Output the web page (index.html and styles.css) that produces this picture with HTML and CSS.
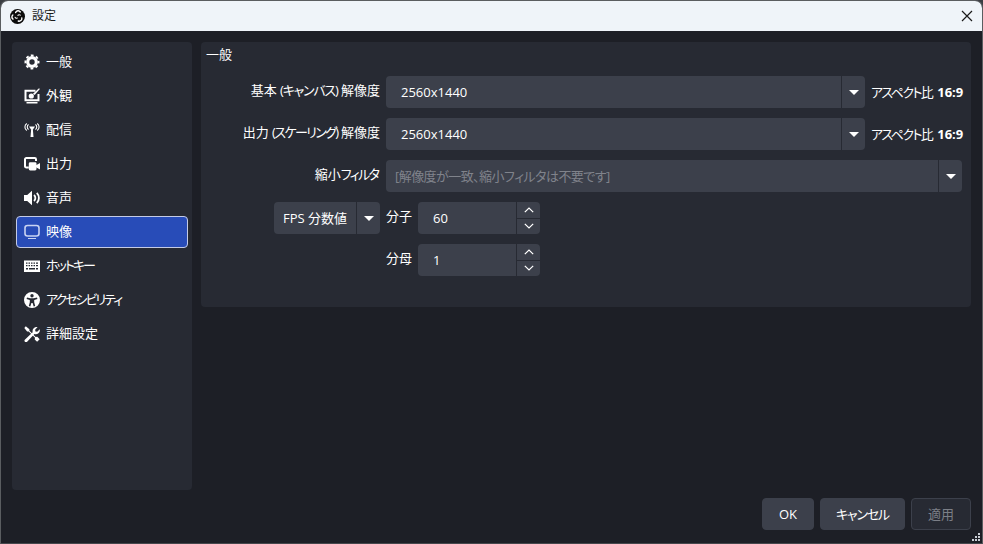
FILE: index.html
```html
<!DOCTYPE html>
<html lang="ja">
<head>
<meta charset="utf-8">
<title>設定</title>
<link rel="stylesheet" href="styles.css">
</head>
<body>
<div class="window">
  <header class="titlebar">
    <svg class="logo" viewBox="0 0 16 16"><circle cx="8" cy="8" r="8" fill="#0c0c0c"/><path fill="none" stroke="#fff" stroke-width="1.500" stroke-linecap="round" d="M6 3.800a2.800 2.800 0 0 1 5-.6M12.600 9.600a2.800 2.800 0 0 1-3.800 3.200M3.200 10.800a2.800 2.800 0 0 1-.2-4.400"/><path fill="none" stroke="#fff" stroke-width="1.100" stroke-linecap="round" d="M8.400 6.800a1.800 1.800 0 0 1 2.600-.2M5.400 8.800a1.800 1.800 0 0 0 2.400.8"/></svg>
    <span class="title">設定</span>
    <svg class="close" viewBox="0 0 12 12"><path d="M1 1l10 10M11 1L1 11" stroke="#1a1a1a" stroke-width="1.200" fill="none"/></svg>
  </header>
  <div class="content">
    <div class="main">
      <nav class="sidebar">
        <div class="item">
          <svg class="ico" viewBox="0 0 16 16"><circle cx="8" cy="8" r="4.300" fill="none" stroke="#fff" stroke-width="3.200"/><circle cx="8" cy="8" r="6.600" fill="none" stroke="#fff" stroke-width="1.800" stroke-dasharray="2.800 2.384" stroke-dashoffset="1.400"/></svg>
          <span>一般</span>
        </div>
        <div class="item">
          <svg class="ico" viewBox="0 0 16 16"><path fill="none" stroke="#fff" stroke-width="2" d="M11.500 2.800H1.500v9.400h13V6"/><path fill="#fff" d="M2.500 14h11v1.500h-11z"/><path fill="#fff" d="M15 .2l.9.9-5.300 6-1.600-1.400z"/><circle cx="7.300" cy="8" r="2.600" fill="#fff"/></svg>
          <span>外観</span>
        </div>
        <div class="item">
          <svg class="ico" viewBox="0 0 16 16"><path fill="#fff" d="M7.200 6.500h1.600l.7 8.500h-3z"/><path fill="#fff" d="M5 4.500h6L9 7.500H7z"/><path fill="none" stroke="#fff" stroke-width="1.100" d="M4.600 2.500a3 3 0 0 0 0 5M11.400 2.500a3 3 0 0 1 0 5M2.800 1.500a4.200 4.200 0 0 0 0 7M13.200 1.500a4.200 4.200 0 0 1 0 7"/></svg>
          <span>配信</span>
        </div>
        <div class="item">
          <svg class="ico" viewBox="0 0 16 16"><path fill="none" stroke="#fff" stroke-width="2" d="M4.800 11.500H2.300A1.300 1.300 0 0 1 1 10.200V3.300A1.300 1.300 0 0 1 2.300 2h8.400A1.300 1.300 0 0 1 12 3.300V5"/><rect x="4.800" y="6.300" width="7.700" height="8.200" rx="1.400" fill="#fff"/><path fill="#fff" d="M12 9.200l4-2.200v6.500l-4-2.200z"/></svg>
          <span>出力</span>
        </div>
        <div class="item">
          <svg class="ico" viewBox="0 0 16 16"><path fill="#fff" d="M0 5h3.200L8 .8v14.400L3.200 11H0z"/><path fill="none" stroke="#fff" stroke-width="1.800" d="M10 5a4 4 0 0 1 0 6M12.800 2.800a7.500 7.500 0 0 1 0 10.400"/></svg>
          <span>音声</span>
        </div>
        <div class="item selected">
          <svg class="ico" viewBox="0 0 16 16"><rect x="1" y="1.500" width="14" height="10.500" rx="2.500" fill="none" stroke="#c9d3f2" stroke-width="1.600"/><path fill="#c9d3f2" d="M4 14h8v1H4z"/></svg>
          <span>映像</span>
        </div>
        <div class="item">
          <svg class="ico" viewBox="0 0 16 16"><path fill="#fff" fill-rule="evenodd" d="M0 2.500h16v11.500H0zM2 4.500v1.200h1.500V4.500zm2.500 0v1.200H6V4.500zM7 4.500v1.200h1.500V4.500zm2.500 0v1.200H11V4.500zM12 4.500v1.200h2V4.500zM2 7v1.200h1.500V7zm2.500 0v1.200H6V7zM7 7v1.200h1.500V7zm2.500 0v1.200H11V7zM12 7v1.200h2V7zM2 10v1.500h2V10zm3 0v1.500h6V10zm7 0v1.500h2V10z"/></svg>
          <span class="kana-xl">ホットキー</span>
        </div>
        <div class="item">
          <svg class="ico" viewBox="0 0 16 16"><path fill="#fff" fill-rule="evenodd" d="M8 0a8 8 0 1 0 0 16A8 8 0 0 0 8 0zm0 2a1.700 1.700 0 1 1 0 3.400A1.700 1.700 0 0 1 8 2zM3 5.500l3.200.8h3.600l3.200-.8.400 1.400-3.200 1v2.300l1 3.800-1.500.4L8.600 11h-1.200l-1.100 3.400-1.500-.4 1-3.800V7.900l-3.200-1z"/></svg>
          <span class="kana-xl">アクセシビリティ</span>
        </div>
        <div class="item">
          <svg class="ico" viewBox="0 0 16 16"><path fill="#fff" d="M1.800.3l3.600 2.900v1.600l6.300 6.300 1.600-.3 2.400 2.400-2.600 2.600-2.400-2.400.3-1.600L4.700 5.500H3.100L.3 1.900z"/><path fill="#fff" d="M15.800 3.300l-2.600 2.500-1.700-.4-.4-1.700L13.600 1a4.200 4.200 0 0 0-4.900 5.200L.8 13.800a1.500 1.500 0 0 0 2.100 2.100l7.500-7.800a4.200 4.200 0 0 0 5.400-4.800z"/></svg>
          <span>詳細設定</span>
        </div>
      </nav>
      <section class="panel">
        <h2 class="group-title">一般</h2>
        <div class="form">
          <label class="lbl">基本 <span class="kana-m">(キャンバス)</span> 解像度</label>
          <div class="field">
            <div class="combo grow"><span class="val">2560x1440</span><span class="arrow"><i class="tri"></i></span></div>
            <span class="aspect"><span class="kana-l">アスペクト</span>比 <b>16:9</b></span>
          </div>
          <label class="lbl">出力 <span class="kana-l">(スケーリング)</span> 解像度</label>
          <div class="field">
            <div class="combo grow"><span class="val">2560x1440</span><span class="arrow"><i class="tri"></i></span></div>
            <span class="aspect"><span class="kana-l">アスペクト</span>比 <b>16:9</b></span>
          </div>
          <label class="lbl">縮小<span class="kana-l end">フィルタ</span></label>
          <div class="field">
            <div class="combo grow"><span class="val muted">[解像度が一致、縮小フィルタは不要です]</span><span class="arrow"><i class="tri"></i></span></div>
          </div>
          <div class="lbl-cell"><div class="combo fps"><span class="fps-val">FPS 分数値</span><span class="arrow"><i class="tri"></i></span></div></div>
          <div class="field">
            <label class="lbl short">分子</label>
            <div class="spin"><span class="spin-val">60</span><span class="spin-btns"><span class="sb up"><svg viewBox="0 0 10 6"><path d="M.8 5.200L5 1l4.200 4.200" fill="none" stroke="#fff" stroke-width="1.200"/></svg></span><span class="sb"><svg viewBox="0 0 10 6"><path d="M.8.800L5 5l4.200-4.200" fill="none" stroke="#fff" stroke-width="1.200"/></svg></span></span></div>
          </div>
          <div></div>
          <div class="field">
            <label class="lbl short">分母</label>
            <div class="spin"><span class="spin-val">1</span><span class="spin-btns"><span class="sb up"><svg viewBox="0 0 10 6"><path d="M.8 5.200L5 1l4.200 4.200" fill="none" stroke="#fff" stroke-width="1.200"/></svg></span><span class="sb"><svg viewBox="0 0 10 6"><path d="M.8.800L5 5l4.200-4.200" fill="none" stroke="#fff" stroke-width="1.200"/></svg></span></span></div>
          </div>
        </div>
      </section>
    </div>
    <footer class="footer">
      <button class="btn ok">OK</button>
      <button class="btn cancel"><span class="kana-m">キャンセル</span></button>
      <button class="btn apply">適用</button>
    </footer>
    <svg class="grip" viewBox="0 0 9 9"><path fill="#c8ccd4" d="M7 1h2v2H7zM4 4h2v2H4zM7 4h2v2H7zM1 7h2v2H1zM4 7h2v2H4zM7 7h2v2H7z"/></svg>
  </div>
</div>
</body>
</html>
```

FILE: styles.css
```css
* { box-sizing: border-box; }
html, body { margin: 0; padding: 0; height: 100%; background: #3a3d42; }
body { font: 13px/18px "Open Sans", "Noto Sans CJK JP", sans-serif; font-feature-settings: "palt"; color: #fff; overflow: hidden; }
.kana-m { letter-spacing: -1.2px; }
.kana-l { letter-spacing: -1.6px; }
.kana-xl { letter-spacing: -2px; }
.end { margin-right: 1.6px; }
.window { width: 983px; height: 544px; display: flex; flex-direction: column; border: 1px solid #5a5d60; border-bottom-color: #45474c; border-radius: 8px 8px 0 0; overflow: hidden; background: #1d1f26; }
.titlebar { flex: 0 0 30px; background: #eff4f9; display: flex; align-items: center; padding: 0 9px; color: #1a1a1a; }
.logo { width: 15px; height: 15px; margin-right: 7px; }
.title { font-size: 12px; flex: 1; }
.close { width: 12px; height: 12px; }
.content { flex: 1; position: relative; display: flex; flex-direction: column; padding: 11px 11px 13px; }
.main { flex: 1; display: flex; gap: 9px; align-items: flex-start; }
.sidebar { width: 180px; height: 448px; background: #272a33; border-radius: 4px; padding: 4px; display: flex; flex-direction: column; gap: 2px; }
.item { height: 32px; display: flex; align-items: center; gap: 6px; padding: 0 7px; border-radius: 4px; border: 1px solid transparent; }
.item span { padding-bottom: 2px; }
.item.selected { background: #284cb8; border-color: #c4cbe6; }
.ico { width: 16px; height: 16px; flex: none; }
.panel { width: 770px; height: 265px; background: #272a33; border-radius: 4px; padding: 3px 9px 0 6px; }
.group-title { margin: 0 0 0 -1px; font-size: 13px; font-weight: 400; line-height: 18px; height: 31px; }
.form { display: grid; grid-template-columns: 173px 576px; grid-auto-rows: 32px; row-gap: 10px; column-gap: 6px; }
.lbl { text-align: right; line-height: 28px; white-space: nowrap; }
.lbl-cell { display: flex; justify-content: flex-end; }
.field { display: flex; gap: 6px; min-width: 0; }
.short { width: 26px; }
.combo { background: #3c404b; border-radius: 4px; display: flex; height: 32px; }
.grow { flex: 1; min-width: 0; }
.val { flex: 1; padding-left: 15px; line-height: 32px; }
.muted { color: #80838b; padding-left: 9px; letter-spacing: -.55px; }
.arrow { width: 24px; flex: none; display: flex; align-items: center; justify-content: center; border-left: 1px solid #272a33; }
.tri { width: 0; height: 0; border-left: 5px solid transparent; border-right: 5px solid transparent; border-top: 5px solid #fff; }
.aspect { width: 91px; flex: none; line-height: 32px; white-space: nowrap; }
.aspect b { font-weight: 700; }
.fps { width: 106px; }
.fps-val { flex: 1; padding-left: 9px; line-height: 32px; white-space: nowrap; }
.spin { width: 122px; height: 32px; background: #3c404b; border-radius: 4px; display: flex; }
.spin-val { flex: 1; padding-left: 15px; line-height: 32px; }
.spin-btns { width: 24px; display: flex; flex-direction: column; border-left: 1px solid #272a33; }
.sb { flex: 1; display: flex; align-items: center; justify-content: center; }
.sb.up { border-bottom: 1px solid #272a33; }
.sb svg { width: 10px; height: 6px; }
.footer { flex: none; display: flex; justify-content: flex-end; gap: 6px; padding-top: 8px; }
.btn { height: 32px; border-radius: 4px; border: 1px solid #3c404b; background: #3c404b; color: #fff; font: inherit; font-feature-settings: "palt"; padding: 0; }
.ok { width: 52px; }
.cancel { width: 85px; }
.apply { width: 60px; background: #272a33; border-color: #3c404b; color: #7c7f87; }
.grip { position: absolute; right: 2px; bottom: 2px; width: 9px; height: 9px; }
```
